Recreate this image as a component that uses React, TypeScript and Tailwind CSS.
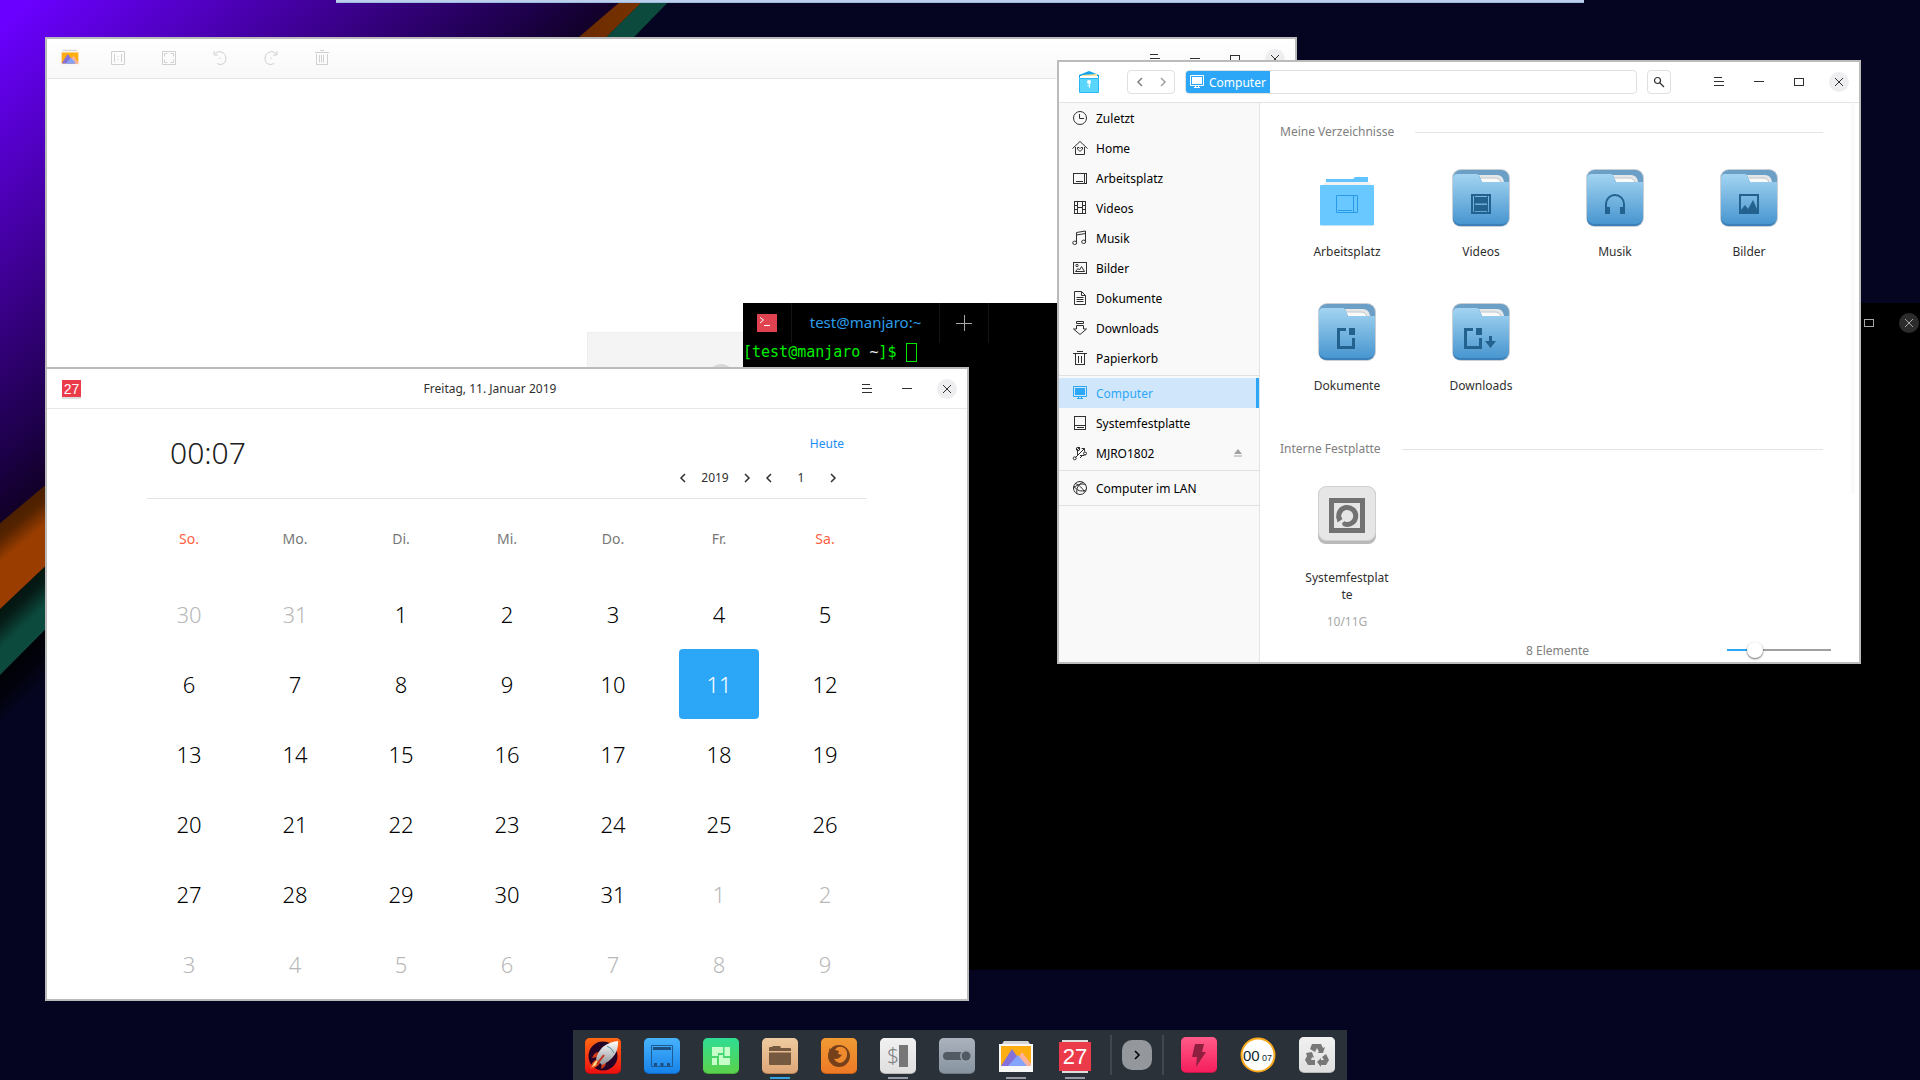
import type { ReactNode } from 'react';

const WEEKDAYS = ['So.', 'Mo.', 'Di.', 'Mi.', 'Do.', 'Fr.', 'Sa.'];

const WEEKS = [
  [30, 31, 1, 2, 3, 4, 5],
  [6, 7, 8, 9, 10, 11, 12],
  [13, 14, 15, 16, 17, 18, 19],
  [20, 21, 22, 23, 24, 25, 26],
  [27, 28, 29, 30, 31, 1, 2],
  [3, 4, 5, 6, 7, 8, 9],
];

const isOtherMonth = (week: number, day: number) => (week === 0 && day > 20) || (week > 3 && day < 15);

/* ---------- window chrome ---------- */

type Control = 'menu' | 'min' | 'max' | 'close';

const CONTROL_LABELS: Record<Control, string> = {
  menu: 'Menü',
  min: 'Minimieren',
  max: 'Maximieren',
  close: 'Schließen',
};

const CONTROL_SHAPES: Record<Control, ReactNode> = {
  menu: <path d="M5 5.5h8M5 9.5h10M5 13.5h10" shapeRendering="crispEdges" />,
  min: <path d="M5 9.5h10" shapeRendering="crispEdges" />,
  max: <path d="M5.5 6.5h9v7h-9z" shapeRendering="crispEdges" />,
  close: <path d="M6 6l8 8M14 6l-8 8" />,
};

function WindowControls({ items, dark = false }: { items: Control[]; dark?: boolean }) {
  return (
    <div className="flex h-10 items-center self-start">
      {items.map((item) => (
        <button key={item} type="button" aria-label={CONTROL_LABELS[item]} className="flex h-full w-10 items-center justify-center">
          <svg
            viewBox="0 0 20 20"
            fill="none"
            stroke={dark ? '#a8a8a8' : '#303030'}
            className={`size-5 rounded-full ${item === 'close' ? (dark ? 'bg-[#2c2c2c]' : 'bg-[#eeeef0]') : ''}`}
          >
            {CONTROL_SHAPES[item]}
          </svg>
        </button>
      ))}
    </div>
  );
}

function Chevron({ left = false }: { left?: boolean }) {
  return (
    <svg viewBox="0 0 10 10" fill="none" stroke="currentColor" strokeWidth="1.5" className="size-[10px]">
      <path d={left ? 'M7 1L3 5l4 4' : 'M3 1l4 4-4 4'} />
    </svg>
  );
}

/* ---------- wallpaper ---------- */

function Wallpaper() {
  return (
    <svg className="absolute left-0 top-0" width="700" height="800" viewBox="0 0 700 800" aria-hidden="true">
      <defs>
        <linearGradient id="purple" gradientUnits="userSpaceOnUse" x1="0" y1="0" x2="255" y2="304">
          <stop offset="0.05" stopColor="#6a00ff" />
          <stop offset="0.55" stopColor="#3e0093" />
          <stop offset="0.88" stopColor="#1d004a" />
          <stop offset="1" stopColor="#12002a" />
        </linearGradient>
        <linearGradient id="orange" gradientUnits="userSpaceOnUse" x1="0" y1="523" x2="19" y2="546">
          <stop offset="0" stopColor="#4a1f00" />
          <stop offset="0.4" stopColor="#562400" />
          <stop offset="1" stopColor="#993d00" />
        </linearGradient>
        <linearGradient id="teal" gradientUnits="userSpaceOnUse" x1="0" y1="609" x2="20" y2="630">
          <stop offset="0" stopColor="#04150f" />
          <stop offset="0.35" stopColor="#061c17" />
          <stop offset="1" stopColor="#0c4a3e" />
        </linearGradient>
        <linearGradient id="night" gradientUnits="userSpaceOnUse" x1="0" y1="675" x2="26" y2="702">
          <stop offset="0" stopColor="#010107" />
          <stop offset="0.4" stopColor="#02020c" />
          <stop offset="1" stopColor="#050521" />
        </linearGradient>
        <linearGradient id="topOrange" x1="0" y1="0" x2="1" y2="0">
          <stop offset="0.1" stopColor="#632800" />
          <stop offset="1" stopColor="#7a3200" />
        </linearGradient>
      </defs>
      <path d="M0 675L300 375V600L0 800z" fill="url(#night)" />
      <path d="M0 609L644 0h26L0 675z" fill="url(#teal)" />
      <path d="M0 523L622 0h22L0 609z" fill="url(#orange)" />
      <path d="M541 70L622 0h22L573 70z" fill="url(#topOrange)" />
      <path d="M573 70L644 0h26L602 70z" fill="#0c4a3e" />
      <path d="M0 0h622L579 37L0 523z" fill="url(#purple)" />
    </svg>
  );
}

/* ---------- shared app logos ---------- */

function PhotoLogo({ className }: { className: string }) {
  return (
    <svg viewBox="0 0 36 36" className={className}>
      <path d="M4 6l2-3h24l2 3z" fill="#d5d5d5" />
      <path d="M1 6h34v28H1z" fill="#f8f8f8" />
      <path d="M3 8h30v20H3z" fill="#ffae12" />
      <path d="M15 28L24 14l9 12v2z" fill="#ffb199" />
      <path d="M3 28L14 11l12 17z" fill="#8571d8" />
      <path d="M10 28l10-11 9 11z" fill="#86a4fb" />
    </svg>
  );
}

/* ---------- image viewer ---------- */

const VIEWER_TOOLS: { label: string; icon: ReactNode }[] = [
  { label: 'Originalgröße', icon: <path d="M1.5 1.5h13v13h-13zM4.5 4v8M11.5 4v8M8 6v1M8 9v1" /> },
  { label: 'Einpassen', icon: <path d="M1.5 1.5h13v13h-13zM3.5 6.500V3.5H6.500M9.500 3.5h3V6.500M12.500 9.500v3H9.500M6.500 12.500h-3V9.500" /> },
  { label: 'Links drehen', icon: <path d="M3 3.500Q7 0 11 2.500Q14 5 14 8Q14 14.500 8 14.500L5 13.500M2 1v4h4M8 7.500v1.500" /> },
  { label: 'Rechts drehen', icon: <path d="M13 3.500Q9 0 5 2.500Q2 5 2 8Q2 14.500 8 14.500L11 13.500M14 1v4h-4M8 7.500v1.500" /> },
  { label: 'Löschen', icon: <path d="M1 2.500h14M6 .5h4M2.500 4v10.500h11V4M5.500 5v7.500M7.500 5v7.500M9.500 5v7.500" /> },
];

function ImageViewer() {
  return (
    <section
      aria-label="Bildbetrachter"
      className="absolute left-[45px] top-[37px] flex h-[375px] w-[1252px] flex-col border-2 border-[#bbbbbb] bg-white"
    >
      <header className="flex h-10 shrink-0 items-center justify-between border-b border-[#e4e4e4] bg-linear-to-b from-white to-[#f8f8f8]">
        <div className="flex items-center pb-px pl-[13px]">
          <PhotoLogo className="size-5" />
          <div className="ml-[20px] flex gap-[15px]">
            {VIEWER_TOOLS.map((tool) => (
              <button key={tool.label} type="button" aria-label={tool.label} className="flex w-9 justify-center">
                <svg viewBox="0 0 16 16" fill="none" stroke="#d0d0d0" className="size-4">
                  {tool.icon}
                </svg>
              </button>
            ))}
          </div>
        </div>
        <WindowControls items={['menu', 'min', 'max', 'close']} />
      </header>
      <div className="flex flex-1 items-end justify-center">
        <div className="flex h-[78px] w-[168px] justify-end border border-[#eeeeee] bg-[#f4f4f4] pr-5 pt-[31px]">
          <span className="size-[26px] rounded-full bg-[#d8d8d8]" />
        </div>
      </div>
    </section>
  );
}

/* ---------- terminal ---------- */

function Terminal() {
  return (
    <section aria-label="Terminal" className="absolute -right-[9px] left-[743px] top-[303px] h-[667px] bg-black">
      <header className="flex h-10 items-center">
        <div className="flex h-full w-[49px] items-center border-r border-[#141414] pl-[14px]">
          <svg viewBox="0 0 20 18" className="h-[18px] w-5">
            <path d="M0 0h20v18H0z" fill="#e0434f" />
            <path d="M3 3.500l3.500 2.500L3 9M7 11.500h6" fill="none" stroke="#fff" />
          </svg>
        </div>
        <button type="button" className="h-full w-[148px] border-r border-[#141414] pb-[2px] text-[15px] text-[#2c9ce8]">
          test@manjaro:~
        </button>
        <button type="button" aria-label="Neuer Tab" className="flex h-full w-[49px] items-center justify-center border-r border-[#141414]">
          <svg viewBox="0 0 16 16" stroke="#a8a8a8" className="size-4">
            <path d="M8.500 0v16M0 8.500h16" />
          </svg>
        </button>
        <div className="ml-auto">
          <WindowControls dark items={['menu', 'min', 'max', 'close']} />
        </div>
      </header>
      <p className="flex h-[18px] items-center whitespace-pre font-['DejaVu_Sans_Mono',monospace] text-[15px] leading-[18px] text-[#00ee00]">
        {'[test@manjaro '}
        <span className="text-[#e8e8e8]">~</span>
        {']$ '}
        <span className="h-[19px] w-[11px] border border-[#00e600]" />
      </p>
    </section>
  );
}

/* ---------- calendar ---------- */

function Calendar() {
  return (
    <section
      aria-label="Kalender"
      className="absolute left-[45px] top-[367px] flex w-[924px] flex-col border-2 border-[#bbbbbb] bg-white"
    >
      <header className="flex h-10 items-center border-b border-[#e8e8e8]">
        <div className="w-[86px] pl-[15px]">
          <span className="flex h-[17px] w-[19px] items-center justify-center bg-[#eb3b4b] font-['Liberation_Sans',sans-serif] text-[14px] leading-none text-white shadow-[0_2px_0_#dddddd]">
            27
          </span>
        </div>
        <h1 className="flex-1 text-center text-[12px] text-[#303030]">Freitag, 11. Januar 2019</h1>
        <WindowControls items={['menu', 'min', 'close']} />
      </header>

      <div className="mx-[100px] flex h-[90px] items-start justify-between border-b border-[#e4e4e4]">
        <time className="pl-[23px] pt-6 text-[30px] font-light leading-10 text-[#202020]">00:07</time>
        <div className="flex flex-col items-end pr-[23px] pt-[25px] text-[12px] leading-5">
          <button type="button" className="text-[#1b8df5]">
            Heute
          </button>
          <div className="flex items-center pt-[14px] text-[#303030]">
            <button type="button" aria-label="Voriges Jahr">
              <Chevron left />
            </button>
            <span className="w-[54px] text-center">2019</span>
            <button type="button" aria-label="Nächstes Jahr">
              <Chevron />
            </button>
            <button type="button" aria-label="Voriger Monat" className="ml-3">
              <Chevron left />
            </button>
            <span className="w-[54px] text-center">1</span>
            <button type="button" aria-label="Nächster Monat" className="mr-[6px]">
              <Chevron />
            </button>
          </div>
        </div>
      </div>

      <table className="mx-[89px] table-fixed">
        <thead>
          <tr className="h-20 text-[14px]">
            {WEEKDAYS.map((name, i) => (
              <th key={name} scope="col" className={`pb-[2px] font-normal ${i % 6 === 0 ? 'text-[#ff6040]' : 'text-[#777777]'}`}>
                {name}
              </th>
            ))}
          </tr>
        </thead>
        <tbody>
          {WEEKS.map((week, w) => (
            <tr key={w}>
              {week.map((day) => {
                const today = w === 1 && day === 11;
                const tone = isOtherMonth(w, day) ? 'text-[#b8b8b8]' : 'text-black';
                return (
                  <td key={day} className="p-0 text-center">
                    <button
                      type="button"
                      className={`h-[70px] w-20 rounded text-[22px] font-light ${today ? 'bg-[#2ca7f8] text-white' : tone}`}
                    >
                      {day}
                    </button>
                  </td>
                );
              })}
            </tr>
          ))}
        </tbody>
      </table>
    </section>
  );
}

/* ---------- file manager ---------- */

const MONITOR = (
  <>
    <path d="M1.500 1.500h13v10h-13z" />
    <path d="M3 3h10v7H3z" fill="currentColor" stroke="none" />
    <path d="M5 13.500h6M6.500 12v1M9.500 12v1" />
  </>
);

const SIDE_ICONS: Record<string, ReactNode> = {
  recent: (
    <>
      <circle cx="8" cy="8" r="6.500" />
      <path d="M7.500 4v4.500H12" />
    </>
  ),
  home: (
    <>
      <path d="M.5 8.500L8 1.500l7.500 7M3.500 7v7.500h9V7" />
      <path d="M8 11.500L5.500 9V7.500H7l1 1 1-1h1.500V9z" />
    </>
  ),
  desktop: <path d="M1.500 3.500h13v10h-13zM12.500 3.500v10M3.500 11.500H11" shapeRendering="crispEdges" />,
  video: <path d="M2.500 1.500h11v12h-11zM5.500 1.500v12M10.500 1.500v12M5.500 7.500h5M2.500 5.500h3M2.500 9.500h3M10.500 5.500h3M10.500 9.500h3" shapeRendering="crispEdges" />,
  music: (
    <>
      <path d="M4.500 12.500v-10l9-1.500v10.500M4.500 5l9-1.500" />
      <ellipse cx="2.700" cy="12.800" rx="2" ry="1.700" />
      <ellipse cx="11.700" cy="11.800" rx="2" ry="1.700" />
    </>
  ),
  image: (
    <>
      <path d="M1.500 2.500h13v11h-13z" shapeRendering="crispEdges" />
      <path d="M3.500 11.500h9L9.500 6.500l-2 3.500-1.500-1.500z" />
      <circle cx="5" cy="5.500" r="1.200" />
    </>
  ),
  doc: <path d="M2.500 1.500h7l4 4v9h-11zM9.500 1.500v4h4M4.500 7.500h7M4.500 9.500h7M4.500 11.500h7" />,
  download: <path d="M4.500 1.500h7v2h-7zM4.500 5.500h7M4.500 5.500v3.500H1.500L8 14.500 14.500 9h-3V5.500" />,
  trash: <path d="M1 3.500h14M5 1.500h6M3.500 4v10.500h9V4M6.500 6v6.500M9.500 6v6.500" shapeRendering="crispEdges" />,
  computer: MONITOR,
  disk: <path d="M2.500 1.500h11v13h-11zM2.500 10.500h11M4.500 12.500h7" shapeRendering="crispEdges" />,
  usb: (
    <>
      <path d="M3.500 12.500l9-9M12.500 6.500V3.500h-3M5.500 10V5.500M8 10.500h4L13.500 9" />
      <circle cx="2.700" cy="13.300" r="1.500" />
      <circle cx="6" cy="4" r="1.700" />
      <circle cx="13" cy="8.500" r="1.500" />
      <path d="M5 5l3-3M8 13l3-3" />
    </>
  ),
  network: (
    <>
      <circle cx="8" cy="8" r="6.500" />
      <path d="M3 3.500c4 1 8 5 9.500 9M1.500 8C6 4 10 3 14 5M5 14C4 9 6 4 11 2.500M2 6c3 5 7 6 12 4" />
    </>
  ),
};

interface Place {
  label: string;
  icon: string;
  ejectable?: boolean;
}

const PLACE_GROUPS: Place[][] = [
  [
    { label: 'Zuletzt', icon: 'recent' },
    { label: 'Home', icon: 'home' },
    { label: 'Arbeitsplatz', icon: 'desktop' },
    { label: 'Videos', icon: 'video' },
    { label: 'Musik', icon: 'music' },
    { label: 'Bilder', icon: 'image' },
    { label: 'Dokumente', icon: 'doc' },
    { label: 'Downloads', icon: 'download' },
    { label: 'Papierkorb', icon: 'trash' },
  ],
  [
    { label: 'Computer', icon: 'computer' },
    { label: 'Systemfestplatte', icon: 'disk' },
    { label: 'MJRO1802', icon: 'usb', ejectable: true },
  ],
  [{ label: 'Computer im LAN', icon: 'network' }],
];

function SidebarItem({ label, icon, ejectable }: Place) {
  const active = label === 'Computer';
  return (
    <li
      className={`flex h-[30px] items-center pl-[13px] ${
        active ? 'border-r-[3px] border-[#2ca7f8] bg-[#d0e7fb] text-[#2ca7f8]' : 'pr-4 text-black'
      }`}
    >
      <a href="#" className="flex flex-1 items-center gap-2">
        <svg viewBox="0 0 16 16" fill="none" stroke="currentColor" className={`size-4 ${active ? '' : 'text-[#303030]'}`}>
          {SIDE_ICONS[icon]}
        </svg>
        <span className="pt-[2px]">{label}</span>
      </a>
      {ejectable && (
        <button type="button" aria-label="Auswerfen">
          <svg viewBox="0 0 10 10" fill="#a0a0a0" className="size-[10px]">
            <path d="M5 1l4 5H1zM1 7.500h8v1H1z" />
          </svg>
        </button>
      )}
    </li>
  );
}

const FOLDER_GLYPHS: Record<string, ReactNode> = {
  Videos: <path fillRule="evenodd" d="M20 26h20v20H20zM22 28v16h1V28zM37 28v16h1V28zM24 35.500v1.500h12v-1.500zM24 28v1h12v-1zM24 43v1h12v-1z" fill="#23628f" />,
  Musik: <path d="M20 46V36a10 10 0 0 1 20 0v10h-5v-7h3v-3a8 8 0 0 0-16 0v3h3v7z" fill="#23628f" />,
  Bilder: <path fillRule="evenodd" d="M20 26h20v20H20zM22 28v14l4-5 3 4 5-9 4 9V28z" fill="#23628f" />,
  Dokumente: <path d="M29 26v3h-6v15h12v-8h3v11H20V26zM32 26h6v7h-6z" fill="#23628f" />,
  Downloads: <path d="M22 26v3h-6v15h12v-8h3v11H13V26zM25 26h6v7h-6zM38 34h3v5h4l-5.500 7-5.500-7h4z" fill="#23628f" />,
};

function FolderIcon({ name }: { name: string }) {
  if (name === 'Arbeitsplatz') {
    return (
      <svg viewBox="0 0 60 60" className="size-[60px]">
        <path d="M9 15v-4h27l2-2h13v6z" fill="#62c4ff" />
        <path d="M6 17l2-3h44l2 3z" fill="#f1f1f1" />
        <rect x="3" y="17" width="54" height="41" rx="1" fill="#bfe2f5" />
        <rect x="3" y="17" width="54" height="40" rx="1" fill="#69c8ff" />
        <path d="M19.500 27.500h21v17h-21zM36.500 27.500v17M21 42.500h14" fill="none" stroke="#2b9ae6" />
      </svg>
    );
  }
  return (
    <svg viewBox="0 0 60 60" className="size-[60px]">
      <rect x="1" y="1" width="58" height="58" rx="9" fill="#c9cfd5" />
      <rect x="2" y="2" width="56" height="56" rx="8" fill="#6c9fc6" />
      <path d="M26 7h20q6 0 7 7v2H26z" fill="#e3e7ea" />
      <path d="M26 10h18q5 0 6 5H26z" fill="#fafafa" stroke="#c0c5c9" />
      <path d="M2 10q0-4 4-4h20q2 0 3 4l2 4h26v36q0 8-8 8H10q-8 0-8-8z" fill="#3b7fb8" />
      <path d="M2 10q0-4 4-4h20q2 0 3 4l2 4h27v34q0 8-8 8H10q-8 0-8-8z" fill="url(#folderFront)" />
      {FOLDER_GLYPHS[name]}
    </svg>
  );
}

function DriveIcon() {
  return (
    <svg viewBox="0 0 60 60" className="size-[60px]">
      <rect x="1" y="2" width="58" height="57" rx="8" fill="#b9b9b9" />
      <rect x="1.500" y="1.500" width="57" height="54" rx="8" fill="#e6e6e6" stroke="#d0d0d0" />
      <path fillRule="evenodd" d="M12 13h36v35H12zM17 18v25h26V18z" fill="#727272" />
      <path d="M22.500 34.500a8.500 8.500 0 1 1 5 4.500" fill="none" stroke="#727272" strokeWidth="5" />
      <path d="M19.500 32l4.500 0 1.500 2-5 3.500zM25 38l3-2 2 5-4 0z" fill="#727272" />
    </svg>
  );
}

function SectionTitle({ children }: { children: ReactNode }) {
  return (
    <h2 className="flex h-5 items-center gap-[21px] text-[12px] text-[#808080] after:h-px after:flex-1 after:bg-[#e4e4e4]">
      {children}
    </h2>
  );
}

const FOLDERS = ['Arbeitsplatz', 'Videos', 'Musik', 'Bilder', 'Dokumente', 'Downloads'];

function FileManager() {
  return (
    <section
      aria-label="Dateiverwaltung"
      className="absolute left-[1057px] top-[60px] flex h-[604px] w-[804px] flex-col border-2 border-[#bbbbbb] bg-white text-[12px]"
    >
      <svg width="0" height="0" className="absolute" aria-hidden="true">
        <linearGradient id="folderFront" x1="0" y1="0" x2="0" y2="1">
          <stop offset="0" stopColor="#a3d4f1" />
          <stop offset="1" stopColor="#4896d0" />
        </linearGradient>
      </svg>

      <header className="flex h-[41px] shrink-0 items-center border-b border-[#e4e4e4]">
        <svg viewBox="0 0 22 24" className="ml-[19px] h-6 w-[22px]">
          <path d="M1 5l10-4 10 4v3H1z" fill="#12a5ee" />
          <path d="M4 5l15-1v4H3z" fill="#ffe69a" />
          <path d="M2 6h18v3H2z" fill="#fff" />
          <path d="M1.500 8.500h19v14h-19z" fill="#5ad6fc" stroke="#2bb8f2" />
          <circle cx="11" cy="12" r="2" fill="#fff" />
          <path d="M11.500 12v6M11 15.500H9.500" stroke="#e8faff" />
        </svg>
        <div className="ml-[27px] flex h-6 w-12 rounded border border-[#e0e0e0] text-[#808080]">
          <button type="button" aria-label="Zurück" className="flex flex-1 items-center justify-center">
            <Chevron left />
          </button>
          <button type="button" aria-label="Vorwärts" className="flex flex-1 items-center justify-center text-[#a0a0a0]">
            <Chevron />
          </button>
        </div>
        <div className="ml-[10px] flex h-6 flex-1 overflow-hidden rounded border border-[#e0e0e0]">
          <button type="button" className="-my-px -ml-px flex w-[85px] items-center gap-1 bg-[#2ca7f8] pl-1 text-white">
            <svg viewBox="0 0 16 16" fill="none" stroke="currentColor" className="size-4">
              {MONITOR}
            </svg>
            <span className="pt-[2px]">Computer</span>
          </button>
          <input type="text" aria-label="Adresse" className="min-w-0 flex-1 outline-none" />
        </div>
        <button type="button" aria-label="Suchen" className="ml-[10px] mr-7 flex size-6 items-center justify-center rounded border border-[#e0e0e0]">
          <svg viewBox="0 0 12 12" fill="none" stroke="#303030" strokeWidth="1.200" className="size-3">
            <circle cx="4.500" cy="4.500" r="3" />
            <path d="M7 7l4 4" />
          </svg>
        </button>
        <WindowControls items={['menu', 'min', 'max', 'close']} />
      </header>

      <div className="flex min-h-0 flex-1">
        <nav className="w-[201px] shrink-0 border-r border-[#e4e4e4] bg-[#f9f9f9]">
          {PLACE_GROUPS.map((group, i) => (
            <ul key={i} className={`border-b border-[#e0e0e0] pb-[2px] ${i > 0 ? 'pt-[2px]' : ''}`}>
              {group.map((place) => (
                <SidebarItem key={place.label} {...place} />
              ))}
            </ul>
          ))}
        </nav>

        <main className="flex flex-1 flex-col pl-5 pr-1">
          <div className="flex min-h-0 flex-1">
            <div className="flex-1 pr-7 pt-[19px]">
              <SectionTitle>Meine Verzeichnisse</SectionTitle>
              <ul className="grid grid-cols-[repeat(4,134px)] pt-[26px]">
                {FOLDERS.map((name) => (
                  <li key={name} className="flex h-[134px] flex-col items-center gap-[15px] text-[#303030]">
                    <FolderIcon name={name} />
                    <span className="leading-[17px]">{name}</span>
                  </li>
                ))}
              </ul>
              <div className="pt-[3px]">
                <SectionTitle>Interne Festplatte</SectionTitle>
              </div>
              <div className="flex w-[134px] flex-col items-center pt-[26px] text-center text-[#303030]">
                <DriveIcon />
                <span className="w-[86px] pt-6 leading-[17px]">
                  Systemfestplat
                  <br />
                  te
                </span>
                <span className="pt-[10px] leading-[17px] text-[#a8a8a8]">10/11G</span>
              </div>
            </div>
            <div className="h-[391px] w-1 rounded bg-[#fafafa]" />
          </div>
          <footer className="flex h-6 shrink-0 items-center pl-[108px] pr-6">
            <span className="flex-1 pt-[2px] text-center text-[#808080]">8 Elemente</span>
            <input
              type="range"
              aria-label="Symbolgröße"
              defaultValue={23}
              className="h-4 w-[104px] appearance-none bg-transparent [&::-webkit-slider-runnable-track]:h-[2px] [&::-webkit-slider-runnable-track]:bg-[linear-gradient(to_right,#2ca7f8_27%,#a0a0a0_27%)] [&::-webkit-slider-thumb]:-mt-[7px] [&::-webkit-slider-thumb]:size-4 [&::-webkit-slider-thumb]:appearance-none [&::-webkit-slider-thumb]:rounded-full [&::-webkit-slider-thumb]:bg-white [&::-webkit-slider-thumb]:shadow-[0_1px_2px_#00000099]"
            />
          </footer>
        </main>
      </div>
    </section>
  );
}

/* ---------- dock ---------- */

function Tile({ fill, edge, children }: { fill: string; edge: string; children: ReactNode }) {
  return (
    <svg viewBox="0 0 36 36" className="size-9">
      <rect width="36" height="36" rx="5" fill={edge} />
      <rect width="36" height="35" rx="5" fill={`url(#${fill})`} />
      {children}
    </svg>
  );
}

const TILE_FILLS = [
  ['red', '#ff6a13', '#ee1010'],
  ['blue', '#48b3fb', '#1783ea'],
  ['green', '#2fdc92', '#5bd24c'],
  ['tan', '#edcba0', '#dfa677'],
  ['fox', '#f19a33', '#ee7a26'],
  ['white', '#f1f1f1', '#dfdfdf'],
  ['steel', '#aab2bd', '#8794a0'],
  ['pink', '#ff5c8a', '#f61e5c'],
  ['hull', '#ffffff', '#8f9297'],
];

const DOCK_LEFT: { label: string; running?: string; icon: ReactNode }[] = [
  {
    label: 'Starter',
    icon: (
      <Tile fill="red" edge="#c90d0d">
        <circle cx="18" cy="18" r="14.500" fill="#250326" />
        <path d="M14 14q-5 0-7 6l6-1zM21 23q1 5-5 8l1-7z" fill="#d13a1c" />
        <path d="M5 31q1-7 7-10l3 4q-3 5-10 6z" fill="#e8481d" />
        <path d="M7 29q1-4 5-7l1 2q-2 4-6 5z" fill="#ffe08a" />
        <path d="M11 21Q15 5 33 3Q34 19 17 27z" fill="url(#hull)" />
        <path d="M22 8q5 2 7 7" fill="none" stroke="#4e8d9b" />
        <path d="M12 26l7-9" stroke="#c2321d" strokeWidth="2" />
      </Tile>
    ),
  },
  {
    label: 'Arbeitsflächen',
    icon: (
      <Tile fill="blue" edge="#1168c4">
        <path d="M7.500 7.500h21v21h-21z" fill="none" stroke="#1d5b97" />
        <path d="M9 9h18v3H9zM10 25h3v3h-3zM16.500 25h3v3h-3zM23 25h3v3h-3z" fill="#1d4f80" />
      </Tile>
    ),
  },
  {
    label: 'Paketverwaltung',
    icon: (
      <Tile fill="green" edge="#42ad3b">
        <path d="M9 9h11v6h-5v3H9zM21.500 9H27v9h-5.500zM9 20h5v7H9zM16 17h4v3h7v7H16z" fill="#c6ffca" />
      </Tile>
    ),
  },
  {
    label: 'Dateiverwaltung',
    running: 'bg-[#36a3e0]',
    icon: (
      <Tile fill="tan" edge="#b78458">
        <path d="M7 13v-3q0-1 1-1h2l1-1h7l1 2h9q1 0 1 1v2z" fill="#755840" />
        <path d="M7 14.500h22V26q0 1-1 1H8q-1 0-1-1z" fill="#755840" />
      </Tile>
    ),
  },
  {
    label: 'Firefox',
    icon: (
      <Tile fill="fox" edge="#c65f18">
        <circle cx="18" cy="18" r="11" fill="#75401a" />
        <path d="M17 9q7-1 9 5 1 9-7 11-6-1-7-5 3 2 6 0l3-3-4-1 1-3-4-1q1-2 3-3z" fill="#ee8a2d" />
        <path d="M8 10q1 2 4 1 2 1 3 3l-2 3q-1 6 5 8-8 0-9-8z" fill="#75401a" />
      </Tile>
    ),
  },
  {
    label: 'Terminal',
    running: 'bg-[#9a9aa6]',
    icon: (
      <Tile fill="white" edge="#b8b8b8">
        <text x="7" y="25" fontSize="21" fill="#808080" className="font-['Noto_Sans',sans-serif] font-light">
          $
        </text>
        <path d="M19 7h9v22h-9z" fill="#777" />
      </Tile>
    ),
  },
  {
    label: 'Einstellungen',
    icon: (
      <Tile fill="steel" edge="#6d7883">
        <path d="M8 14h16v8H8a4 4 0 0 1 0-8z" fill="#515963" />
        <circle cx="27" cy="18" r="6" fill="#99a3ae" />
        <circle cx="27" cy="18" r="4.500" fill="#515963" />
      </Tile>
    ),
  },
  { label: 'Bildbetrachter', running: 'bg-[#9a9aa6]', icon: <PhotoLogo className="size-9" /> },
  {
    label: 'Kalender',
    running: 'bg-[#9a9aa6]',
    icon: (
      <svg viewBox="0 0 36 36" className="size-9">
        <path d="M5 2h26v2H5zM5 33h26v2H5z" fill="#ddd" />
        <path d="M2 4h32v29H2z" fill="#eb3b4b" />
        <text x="18" y="26" fontSize="22" textAnchor="middle" fill="#fff" className="font-['Liberation_Sans',sans-serif]">
          27
        </text>
      </svg>
    ),
  },
];

const DOCK_RIGHT: { label: string; icon: ReactNode }[] = [
  {
    label: 'Energie',
    icon: (
      <Tile fill="pink" edge="#c51447">
        <path d="M14 7h9l-2 8h4L15 30l1-10h-5z" fill="#8e1f3e" />
      </Tile>
    ),
  },
  {
    label: 'Uhr',
    icon: (
      <svg viewBox="0 0 36 36" className="size-9">
        <circle cx="18" cy="18" r="16.500" fill="#fff" stroke="#f9a91b" strokeWidth="2" />
        <text x="3" y="24" fontSize="15" fill="#12292e" className="font-['Liberation_Sans',sans-serif]">
          00
        </text>
        <text x="22" y="24" fontSize="9" fill="#12292e" className="font-['Liberation_Sans',sans-serif]">
          07
        </text>
      </svg>
    ),
  },
  {
    label: 'Papierkorb',
    icon: (
      <Tile fill="white" edge="#b8b8b8">
        <g fill="#777">
          <path d="M13 7h9l2 4 2-1-2 6h-6l2-1-2-4-2 4-5-3z" />
          <path d="M27 17l3 6-3 5h-5v2l-4-5 4-4v2h3l-2-3z" />
          <path d="M7 16l6-1 2 6-2-1-1 3h4v5H9l-3-5 2-4z" />
        </g>
      </Tile>
    ),
  },
];

function Dock() {
  return (
    <footer className="absolute bottom-0 left-1/2 flex h-[50px] -translate-x-1/2 items-stretch bg-[#2b3138] pr-px">
      <svg width="0" height="0" className="absolute" aria-hidden="true">
        {TILE_FILLS.map(([id, from, to]) => (
          <linearGradient key={id} id={id} x1="0" y1="0" x2="0" y2="1">
            <stop offset="0" stopColor={from} />
            <stop offset="1" stopColor={to} />
          </linearGradient>
        ))}
      </svg>
      {DOCK_LEFT.map((app) => (
        <button key={app.label} type="button" aria-label={app.label} className="flex w-[59px] flex-col items-center pt-2">
          {app.icon}
          {app.running && <span className={`mt-[3px] h-[2px] w-5 ${app.running}`} />}
        </button>
      ))}
      <div className="my-[5px] ml-[6px] flex w-[54px] items-center justify-center border-x-2 border-[#41474e]">
        <button type="button" aria-label="Mehr anzeigen" className="flex size-[30px] items-center justify-center rounded-[10px] bg-[#94989c] text-black">
          <Chevron />
        </button>
      </div>
      <div className="ml-[5px] flex">
        {DOCK_RIGHT.map((app) => (
          <button key={app.label} type="button" aria-label={app.label} className="flex w-[59px] justify-center pt-[7px]">
            {app.icon}
          </button>
        ))}
      </div>
    </footer>
  );
}

export default function App() {
  return (
    <div className="relative min-h-screen overflow-hidden bg-[#050521] font-['Noto_Sans',sans-serif]">
      <Wallpaper />
      <div className="absolute left-[336px] top-0 h-[3px] w-[1248px] border-b border-[#9db9e0] bg-[#bccfec]" />
      <ImageViewer />
      <Terminal />
      <Calendar />
      <FileManager />
      <Dock />
    </div>
  );
}
